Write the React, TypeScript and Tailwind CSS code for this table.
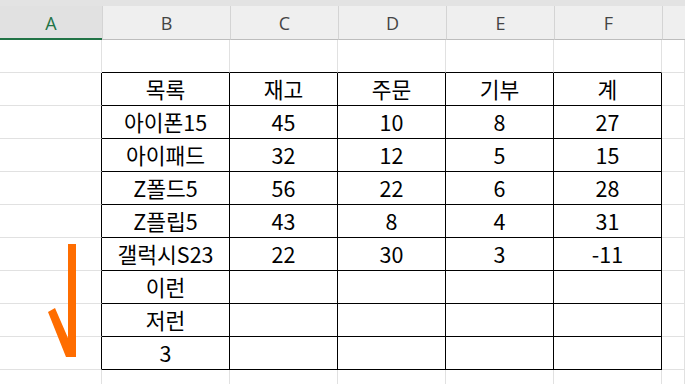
import React from "react";

const cellFont = {
  fontFamily: '"Noto Sans CJK KR", "Noto Sans", sans-serif',
};

const rows: string[][] = [
  ["목록", "재고", "주문", "기부", "계"],
  ["아이폰15", "45", "10", "8", "27"],
  ["아이패드", "32", "12", "5", "15"],
  ["Z폴드5", "56", "22", "6", "28"],
  ["Z플립5", "43", "8", "4", "31"],
  ["갤럭시S23", "22", "30", "3", "-11"],
  ["이런", "", "", "", ""],
  ["저런", "", "", "", ""],
  ["3", "", "", "", ""],
];

const letters = ["B", "C", "D", "E", "F"];

function GridCell({
  children,
  right = "border-r-[#e1e1e1]",
  bottom = "border-b-[#e1e1e1]",
}: {
  children?: React.ReactNode;
  right?: string;
  bottom?: string;
}) {
  return (
    <div
      className={`h-[33px] border-r border-b ${right} ${bottom} flex items-center justify-center text-[21.5px] text-black leading-none`}
      style={cellFont}
    >
      {children}
    </div>
  );
}

export default function App() {
  return (
    <div className="relative w-[685px] h-[384px] overflow-hidden bg-white">
      <div className="h-[6px] bg-[#e3e3e3]" />
      {/* column headers */}
      <div
        className="grid grid-cols-[102px_128px_108px_108px_108px_108px_1fr] h-[34px]"
        style={{ fontFamily: '"Open Sans", "Noto Sans", sans-serif' }}
      >
        <div className="bg-[#e1e1e1] border-b-2 border-b-[#217346] flex items-center justify-center pt-[2px] text-[18px] text-[#217346]">
          A
        </div>
        {letters.map((l) => (
          <div
            key={l}
            className="bg-[#efefef] border-l border-l-[#d4d4d4] border-b border-b-[#bdbdbd] flex items-center justify-center pt-[1px] text-[18px] text-[#444444]"
          >
            {l}
          </div>
        ))}
        <div className="bg-[#efefef] border-l border-l-[#d4d4d4] border-b border-b-[#bdbdbd]" />
      </div>

      {/* sheet body */}
      <div className="grid grid-cols-[102px_128px_108px_108px_108px_108px_1fr]">
        {/* row 1 */}
        <GridCell />
        {letters.map((l) => (
          <GridCell key={`r1-${l}`} bottom="border-b-black" />
        ))}
        <GridCell />

        {rows.map((r, i) => (
          <React.Fragment key={i}>
            <GridCell right="border-r-black" />
            {r.map((v, j) => (
              <GridCell key={j} right="border-r-black" bottom="border-b-black">
                {v}
              </GridCell>
            ))}
            <GridCell />
          </React.Fragment>
        ))}

        {/* trailing row */}
        <GridCell />
        {letters.map((l) => (
          <GridCell key={`rl-${l}`} />
        ))}
        <GridCell />
      </div>

      {/* hand-drawn check stroke */}
      <svg
        className="absolute left-0 top-0 pointer-events-none"
        width="685"
        height="384"
        viewBox="0 0 685 384"
      >
        <polygon
          points="68,244 76,244 76,357 66,357 48,312 55,308 68,338"
          fill="#ff6d00"
        />
      </svg>
    </div>
  );
}
